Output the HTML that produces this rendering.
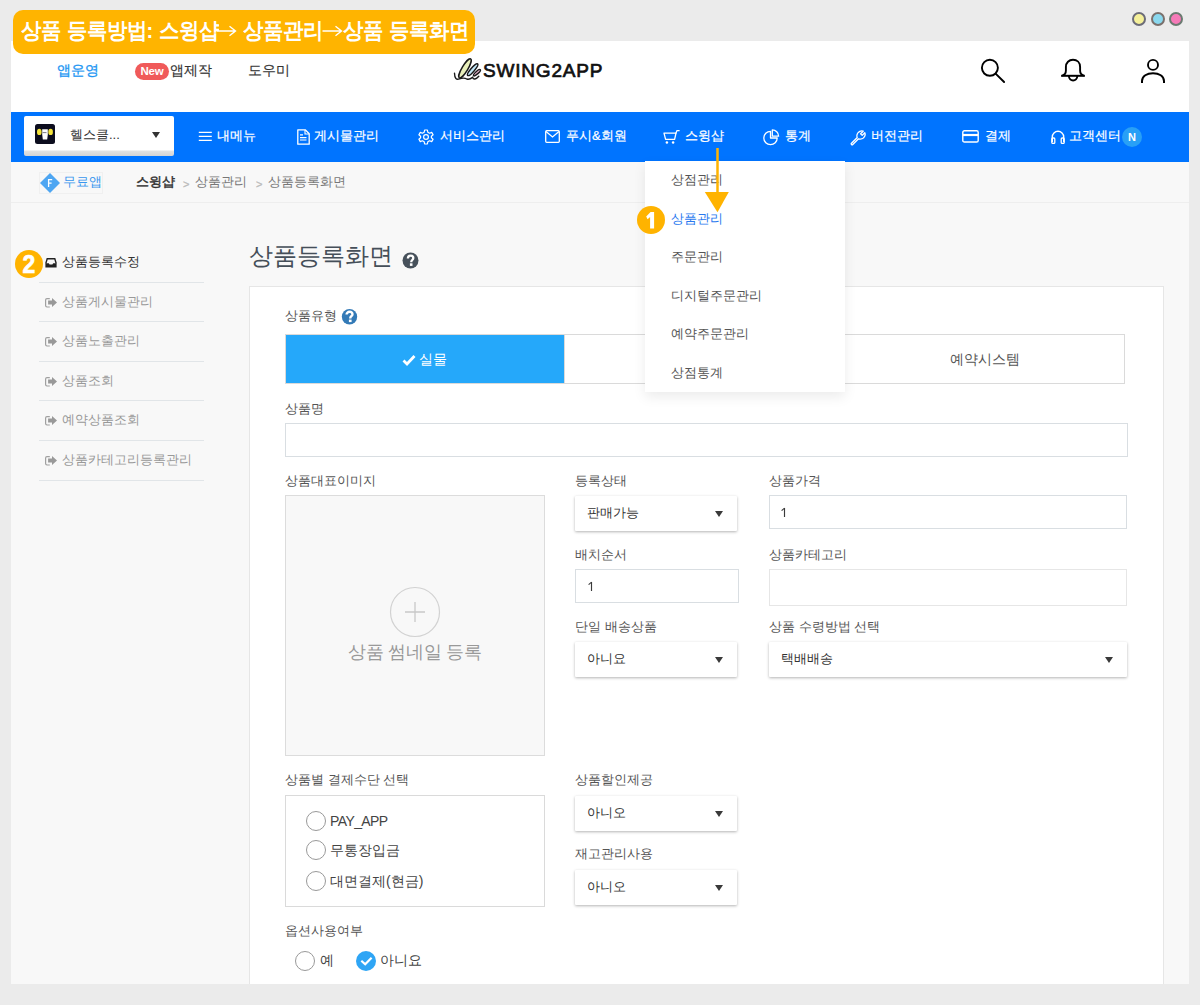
<!DOCTYPE html>
<html><head><meta charset="utf-8">
<style>
*{box-sizing:border-box;margin:0;padding:0}
html,body{width:1200px;height:1005px;overflow:hidden}
body{background:#ebebeb;font-family:"Liberation Sans",sans-serif;position:relative;color:#333}
.a{position:absolute;white-space:nowrap;line-height:1}
.tl{position:absolute;top:12px;width:14px;height:14px;border-radius:50%;border:2px solid #6c6c78}
#frame{position:absolute;left:11px;top:41px;width:1178px;height:943px;background:#fff}
#banner{position:absolute;left:13px;top:10px;width:462px;height:44px;border-radius:10px;background:#ffb400;z-index:5}
.bt{position:absolute;top:21px;font-size:20px;line-height:20px;font-weight:bold;color:#fff;white-space:nowrap;z-index:6;transform:scaleY(1.08);transform-origin:0 60%}
#banner~svg{z-index:6}
#nav{position:absolute;left:11px;top:112px;width:1178px;height:50px;background:#0074ff}
#body{position:absolute;left:11px;top:162px;width:1178px;height:822px;background:#f8f8f8}
.nv{position:absolute;top:129px;font-size:13px;color:#fff;line-height:13px;-webkit-text-stroke:0.2px #fff;white-space:nowrap}
.nv svg{position:absolute}
.bc{position:absolute;top:175px;font-size:13px;line-height:13px;color:#777;white-space:nowrap}
.sb{position:absolute;left:39px;width:165px;height:40px;border-bottom:1px solid #e1e5e8}
.sb span{position:absolute;left:23px;top:12px;font-size:13px;line-height:13px;color:#999;white-space:nowrap}
.sb i{position:absolute;left:6px;top:15px;display:block;line-height:0}
.sb i svg{display:block}
.lbl{position:absolute;font-size:13px;line-height:13px;color:#555;white-space:nowrap}
.inp{position:absolute;background:#fff;border:1px solid #d9dee2}
.inp span{position:absolute;left:11px;top:11px;font-size:13px;line-height:13px;color:#333}
.sel{position:absolute;background:#fff;box-shadow:0 1px 3px rgba(0,0,0,.3);border-radius:1px}
.sel span{position:absolute;left:12px;top:10px;font-size:13px;line-height:13px;color:#333;white-space:nowrap}
.sel b{position:absolute;right:14px;top:15px;width:0;height:0;border-left:4px solid transparent;border-right:4px solid transparent;border-top:6px solid #3a3a3a}
.dd{position:absolute;left:671px;font-size:13px;line-height:13px;color:#555;white-space:nowrap}
.rad{position:absolute;width:20px;height:20px;border-radius:50%;border:1px solid #999;background:#fff}
.rl{position:absolute;font-size:14px;line-height:14px;color:#444;white-space:nowrap}
</style></head><body>
<div class="tl" style="left:1132px;background:#f5f09a;border-color:#6c6c78"></div>
<div class="tl" style="left:1151px;background:#8ad8ee;border-color:#7a706c"></div>
<div class="tl" style="left:1169px;background:#f57ab8;border-color:#6a7a70"></div>

<div id="frame"></div>

<!-- header -->
<div class="a" style="left:57px;top:63px;font-size:14px;color:#2196f3;-webkit-text-stroke:0.3px #2196f3">앱운영</div>
<div class="a" style="left:135px;top:63px;width:34px;height:17px;border-radius:9px;background:#f05a5a;color:#fff;font-size:11.5px;font-weight:bold;line-height:17px;text-align:center;letter-spacing:-0.2px">New</div>
<div class="a" style="left:170px;top:63px;font-size:14px;color:#333;-webkit-text-stroke:0.15px #333">앱제작</div>
<div class="a" style="left:248px;top:63px;font-size:14px;color:#333;-webkit-text-stroke:0.15px #333">도우미</div>

<!-- logo -->
<svg class="a" style="left:450px;top:54px" width="36" height="30" viewBox="0 0 36 30">
 <ellipse cx="15" cy="14.4" rx="2.9" ry="11" transform="rotate(31 15 14.4)" fill="#e9f0bb" stroke="#1a1a1a" stroke-width="1.5"/>
 <ellipse cx="22.6" cy="15.8" rx="1.9" ry="7.6" transform="rotate(41 22.8 15.8)" fill="#c2e7f8" stroke="#1a1a1a" stroke-width="1.5"/>
 <ellipse cx="26.9" cy="18.8" rx="1.3" ry="4.5" transform="rotate(48 27.1 18.8)" fill="#f2bcd8" stroke="#1a1a1a" stroke-width="1.5"/>
 <path d="M4.5 19.2 C4.6 24.5, 6.5 26, 9.4 24.8 C12 24, 14.5 23.6, 16.8 25 C18.8 25.8, 21 24.6, 22.6 23.4 C23.5 25.8, 25.8 25.6, 28.8 22.2" fill="none" stroke="#1a1a1a" stroke-width="1.4" stroke-linecap="round"/>
</svg>
<div class="a" style="left:483px;top:61px;font-size:19px;color:#111;letter-spacing:0.8px;-webkit-text-stroke:0.7px #111">SWING2APP</div>

<!-- header icons -->
<svg class="a" style="left:978px;top:56px" width="30" height="30" viewBox="0 0 30 30">
 <circle cx="11.9" cy="11.8" r="8" fill="none" stroke="#000" stroke-width="1.9"/>
 <path d="M17.6 17.6 L26.1 26" stroke="#000" stroke-width="1.9" stroke-linecap="round"/>
</svg>
<svg class="a" style="left:1058px;top:56px" width="30" height="30" viewBox="0 0 30 30">
 <path d="M4.2 19.6 C6.9 19, 7.9 17.2, 7.9 14.6 V11 C7.9 6.6 11 3.8 15 3.8 C19 3.8 22.1 6.6 22.1 11 V14.6 C22.1 17.2 23.1 19 25.8 19.6" fill="none" stroke="#000" stroke-width="1.9"/>
 <path d="M3.1 19.8 H26.9" stroke="#000" stroke-width="2"/>
 <path d="M10.9 20 C10.9 25.9 19.3 25.9 19.3 20" fill="none" stroke="#000" stroke-width="1.9"/>
</svg>
<svg class="a" style="left:1138px;top:56px" width="30" height="30" viewBox="0 0 30 30">
 <circle cx="15" cy="8.9" r="5" fill="none" stroke="#000" stroke-width="1.9"/>
 <path d="M4 27 V25 C4 20 9 17.2 15 17.2 C21 17.2 26 20 26 25 V27" fill="none" stroke="#000" stroke-width="2"/>
</svg>

<div id="nav"></div>
<div id="body"></div>

<!-- nav -->
<div class="a" style="left:24px;top:116px;width:150px;height:40px;background:linear-gradient(#fff 0,#fff 34px,#e2e2e2 35px,#d4d4d4 40px);border-radius:2px"></div>
<svg class="a" style="left:35px;top:124px" width="20" height="20" viewBox="0 0 20 20">
 <rect width="20" height="20" rx="2.5" fill="#0c0d1e"/>
 <ellipse cx="4.3" cy="7.9" rx="2.3" ry="3.2" fill="#f5e43a"/><ellipse cx="15.6" cy="7.9" rx="2.3" ry="3.2" fill="#f5e43a"/>
 <path d="M7.2 5.2H12.8V10.5L12.2 15.6H7.8L7.2 10.5Z" fill="#fff"/>
 <path d="M7.6 8.6H11.5" stroke="#445" stroke-width="0.7"/>
</svg>
<div class="a" style="left:70px;top:128px;font-size:13px;color:#333">헬스클...</div>
<div class="a" style="left:152px;top:132px;width:0;height:0;border-left:4px solid transparent;border-right:4px solid transparent;border-top:6px solid #333"></div>

<svg class="a" style="left:198px;top:130px" width="14" height="12" viewBox="0 0 14 12"><path d="M0.8 2.4H13.8M0.8 6.3H13.8M0.8 10.3H13.8" stroke="#fff" stroke-width="1.2"/></svg>
<div class="nv" style="left:217px">내메뉴</div>
<svg class="a" style="left:297px;top:129px" width="13" height="16" viewBox="0 0 13 16"><path d="M0.8 0.8H8.2L12.2 4.8V15.2H0.8Z" fill="none" stroke="#fff" stroke-width="1.3" stroke-linejoin="round"/><path d="M8 1V5H12" fill="none" stroke="#fff" stroke-width="1.1"/><path d="M3 5.8H6M3 8.6H9.5M3 11H9.5" fill="none" stroke="#fff" stroke-width="1.2"/></svg>
<div class="nv" style="left:314px">게시물관리</div>
<svg class="a" style="left:418px;top:129px" width="16" height="16" viewBox="0 0 16 16"><path d="M6.6 1H9.4L9.8 3.2L11.6 4.2L13.7 3.4L15.1 5.8L13.4 7.2V8.8L15.1 10.2L13.7 12.6L11.6 11.8L9.8 12.8L9.4 15H6.6L6.2 12.8L4.4 11.8L2.3 12.6L0.9 10.2L2.6 8.8V7.2L0.9 5.8L2.3 3.4L4.4 4.2L6.2 3.2Z" fill="none" stroke="#fff" stroke-width="1.2" stroke-linejoin="round"/><circle cx="8" cy="8" r="2.4" fill="none" stroke="#fff" stroke-width="1.2"/></svg>
<div class="nv" style="left:440px">서비스관리</div>
<svg class="a" style="left:545px;top:130px" width="15" height="13" viewBox="0 0 15 13"><rect x="0.7" y="0.7" width="13.6" height="11.6" rx="1" fill="none" stroke="#fff" stroke-width="1.3"/><path d="M1 1.5L7.5 7L14 1.5" fill="none" stroke="#fff" stroke-width="1.3"/></svg>
<div class="nv" style="left:566px">푸시&amp;회원</div>
<svg class="a" style="left:663px;top:128px" width="17" height="17" viewBox="0 0 17 17"><path d="M1 5.2H13L11.6 11.4H2.6Z" fill="none" stroke="#fff" stroke-width="1.3" stroke-linejoin="round"/><path d="M12.8 5.5L14 2.6H16.6" fill="none" stroke="#fff" stroke-width="1.3"/><circle cx="3.9" cy="14.6" r="1.25" fill="#fff"/><circle cx="10.1" cy="14.6" r="1.25" fill="#fff"/></svg>
<div class="nv" style="left:685px">스윙샵</div>
<svg class="a" style="left:762px;top:129px" width="18" height="17" viewBox="0 0 18 17"><path d="M8.5 2.3A6.7 6.7 0 1 0 15.2 9H8.5Z" fill="none" stroke="#fff" stroke-width="1.3" stroke-linejoin="round"/><path d="M10.3 0.9V7.2H16.6A6.3 6.3 0 0 0 10.3 0.9Z" fill="none" stroke="#fff" stroke-width="1.3" stroke-linejoin="round"/></svg>
<div class="nv" style="left:785px">통계</div>
<svg class="a" style="left:850px;top:130px" width="16" height="16" viewBox="0 0 16 16"><path d="M1.5 13.2L7.2 7.5C6.4 5.2 7.4 2.4 9.8 1.3C11 0.8 12.2 0.8 13.2 1.2L10.6 3.8L12.2 5.4L14.8 2.8C15.3 3.9 15.2 5.2 14.7 6.3C13.6 8.6 10.8 9.6 8.5 8.8L2.8 14.5C2.4 14.9 1.9 14.9 1.5 14.5C1.1 14.1 1.1 13.6 1.5 13.2Z" fill="none" stroke="#fff" stroke-width="1.3" stroke-linejoin="round"/></svg>
<div class="nv" style="left:871px">버전관리</div>
<svg class="a" style="left:962px;top:130px" width="17" height="13" viewBox="0 0 17 13"><rect x="0.8" y="0.8" width="15.4" height="11.2" rx="1.6" fill="none" stroke="#fff" stroke-width="1.4"/><path d="M1 5H16" stroke="#fff" stroke-width="2.2"/></svg>
<div class="nv" style="left:985px">결제</div>
<svg class="a" style="left:1051px;top:129px" width="14" height="15" viewBox="0 0 14 15"><path d="M1.3 13V8A5.7 5.7 0 0 1 12.7 8V13" fill="none" stroke="#fff" stroke-width="1.4"/><rect x="0.8" y="9" width="3" height="5.4" rx="1" fill="none" stroke="#fff" stroke-width="1.3"/><rect x="10.2" y="9" width="3" height="5.4" rx="1" fill="none" stroke="#fff" stroke-width="1.3"/></svg>
<div class="nv" style="left:1069px">고객센터</div>
<div class="a" style="left:1122px;top:127px;width:20px;height:20px;border-radius:50%;background:#28a0f6;color:#fff;font-size:11px;font-weight:bold;line-height:20px;text-align:center">N</div>

<!-- breadcrumb -->
<div class="a" style="left:11px;top:202px;width:1178px;height:1px;background:#eeeeee"></div>
<div class="a" style="left:39px;top:172px;width:64px;height:22px;border:1px solid #f0f0f0"></div>
<svg class="a" style="left:40px;top:173px" width="20" height="20" viewBox="0 0 20 20"><path d="M10 0L20 10L10 20L0 10Z" fill="#4ea6f2"/><path d="M8.6 14V6.6H12.2M8.6 10.2H11.6" fill="none" stroke="#fff" stroke-width="1.3"/></svg>
<div class="bc" style="left:63px;color:#3996ee">무료앱</div>
<div class="bc" style="left:136px;color:#333;-webkit-text-stroke:0.45px #333">스윙샵</div>
<div class="bc" style="left:183px;top:178px;color:#bbb;font-size:11px;-webkit-text-stroke:0.3px #bbb">&gt;</div>
<div class="bc" style="left:195px">상품관리</div>
<div class="bc" style="left:256px;top:178px;color:#bbb;font-size:11px;-webkit-text-stroke:0.3px #bbb">&gt;</div>
<div class="bc" style="left:268px">상품등록화면</div>

<!-- sidebar -->
<div class="sb" style="top:243px"><i style="top:15px"><svg width="12" height="10" viewBox="0 0 12 10"><path d="M0.8 5.5L2.2 0.8H9.8L11.2 5.5" fill="none" stroke="#222" stroke-width="1.4"/><path d="M0.4 5.2H3.8L4.6 6.6H7.4L8.2 5.2H11.6V9.6H0.4Z" fill="#222"/></svg></i><span style="color:#333">상품등록수정</span></div>
<div class="sb" style="top:282px"><i style="top:16px"><svg width="13" height="10" viewBox="0 0 13 10"><path d="M4.8 0.6H2Q0.6 0.6 0.6 2V7.6Q0.6 9 2 9H4.8" fill="none" stroke="#a0a0a0" stroke-width="1.2"/><path d="M3.1 2.6H7V0L12 4.5L7 9V6.4H3.1Z" fill="#999"/></svg></i><span style="top:13px">상품게시물관리</span></div>
<div class="sb" style="top:322px"><i><svg width="13" height="10" viewBox="0 0 13 10"><path d="M4.8 0.6H2Q0.6 0.6 0.6 2V7.6Q0.6 9 2 9H4.8" fill="none" stroke="#a0a0a0" stroke-width="1.2"/><path d="M3.1 2.6H7V0L12 4.5L7 9V6.4H3.1Z" fill="#999"/></svg></i><span>상품노출관리</span></div>
<div class="sb" style="top:361px"><i style="top:16px"><svg width="13" height="10" viewBox="0 0 13 10"><path d="M4.8 0.6H2Q0.6 0.6 0.6 2V7.6Q0.6 9 2 9H4.8" fill="none" stroke="#a0a0a0" stroke-width="1.2"/><path d="M3.1 2.6H7V0L12 4.5L7 9V6.4H3.1Z" fill="#999"/></svg></i><span style="top:13px">상품조회</span></div>
<div class="sb" style="top:401px"><i><svg width="13" height="10" viewBox="0 0 13 10"><path d="M4.8 0.6H2Q0.6 0.6 0.6 2V7.6Q0.6 9 2 9H4.8" fill="none" stroke="#a0a0a0" stroke-width="1.2"/><path d="M3.1 2.6H7V0L12 4.5L7 9V6.4H3.1Z" fill="#999"/></svg></i><span>예약상품조회</span></div>
<div class="sb" style="top:441px"><i><svg width="13" height="10" viewBox="0 0 13 10"><path d="M4.8 0.6H2Q0.6 0.6 0.6 2V7.6Q0.6 9 2 9H4.8" fill="none" stroke="#a0a0a0" stroke-width="1.2"/><path d="M3.1 2.6H7V0L12 4.5L7 9V6.4H3.1Z" fill="#999"/></svg></i><span>상품카테고리등록관리</span></div>

<!-- title -->
<div class="a" style="left:249px;top:244px;font-size:24px;color:#454f59">상품등록화면</div>
<svg class="a" style="left:402px;top:252px" width="17" height="17" viewBox="0 0 17 17"><circle cx="8.5" cy="8.5" r="8" fill="#47515b"/><path d="M5.9 6.5C5.9 4.8 7.1 3.7 8.6 3.7C10.1 3.7 11.3 4.7 11.3 6.1C11.3 7.9 9.3 8.1 9.3 9.7V10.2" fill="none" stroke="#fff" stroke-width="2.3"/><rect x="7.9" y="11.3" width="2.6" height="2.6" fill="#fff"/></svg>

<!-- panel -->
<div class="a" style="left:249px;top:286px;width:915px;height:720px;background:#fff;border:1px solid #e6e6e6"></div>
<div class="lbl" style="left:285px;top:309px">상품유형</div>
<svg class="a" style="left:341px;top:308px" width="17" height="17" viewBox="0 0 17 17"><circle cx="8.5" cy="8.7" r="7.7" fill="#337ab7"/><path d="M5.6 6.6C5.6 4.8 6.9 3.8 8.6 3.8C10.3 3.8 11.5 4.8 11.5 6.2C11.5 8 9.3 8.3 9.3 10V10.6" fill="none" stroke="#fff" stroke-width="2.4"/><rect x="7.9" y="11.6" width="2.7" height="2.5" fill="#fff"/></svg>
<div class="a" style="left:285px;top:334px;width:840px;height:50px;border:1px solid #dadada;background:#fff"></div>
<div class="a" style="left:286px;top:335px;width:278px;height:48px;background:#25a8fa"></div>
<div class="a" style="left:564px;top:334px;width:1px;height:50px;background:#dadada"></div>
<div class="a" style="left:844px;top:334px;width:1px;height:50px;background:#dadada"></div>
<svg class="a" style="left:402px;top:354px" width="14" height="12" viewBox="0 0 14 12"><path d="M1.5 6.5L5 10L12.5 2" fill="none" stroke="#fff" stroke-width="2.8"/></svg>
<div class="a" style="left:419px;top:352px;font-size:14px;color:#fff">실물</div>
<div class="a" style="left:950px;top:352px;font-size:14px;color:#555">예약시스템</div>

<div class="lbl" style="left:285px;top:402px">상품명</div>
<div class="inp" style="left:285px;top:423px;width:843px;height:34px"></div>

<div class="lbl" style="left:285px;top:474px">상품대표이미지</div>
<div class="a" style="left:285px;top:495px;width:260px;height:261px;background:#f8f8f8;border:1px solid #dcdcdc"></div>
<svg class="a" style="left:389px;top:586px" width="52" height="52" viewBox="0 0 52 52"><circle cx="26" cy="26" r="24.5" fill="none" stroke="#d2d2d2" stroke-width="1.2"/><path d="M26 16V36M16 26H36" stroke="#c8c8c8" stroke-width="1.3"/></svg>
<div class="a" style="left:348px;top:643px;font-size:18px;color:#999;letter-spacing:-0.25px">상품 썸네일 등록</div>

<div class="lbl" style="left:575px;top:474px">등록상태</div>
<div class="sel" style="left:575px;top:496px;width:162px;height:35px"><span>판매가능</span><b></b></div>
<div class="lbl" style="left:575px;top:548px">배치순서</div>
<div class="inp" style="left:575px;top:569px;width:164px;height:34px"><svg style="position:absolute;left:11px;top:11px" width="7" height="11" viewBox="0 0 7 11"><path d="M4.5 1V10" stroke="#3a3a3a" stroke-width="1.15"/><path d="M1.6 3.6L4.6 1.1" stroke="#3a3a3a" stroke-width="1.1"/></svg></div>
<div class="lbl" style="left:575px;top:620px">단일 배송상품</div>
<div class="sel" style="left:575px;top:642px;width:162px;height:35px"><span>아니요</span><b></b></div>

<div class="lbl" style="left:769px;top:474px">상품가격</div>
<div class="inp" style="left:769px;top:495px;width:358px;height:34px"><svg style="position:absolute;left:10px;top:11px" width="7" height="11" viewBox="0 0 7 11"><path d="M4.5 1V10" stroke="#3a3a3a" stroke-width="1.15"/><path d="M1.6 3.6L4.6 1.1" stroke="#3a3a3a" stroke-width="1.1"/></svg></div>
<div class="lbl" style="left:769px;top:548px">상품카테고리</div>
<div class="inp" style="left:769px;top:569px;width:358px;height:37px;border-color:#e6e6e6"></div>
<div class="lbl" style="left:769px;top:620px">상품 수령방법 선택</div>
<div class="sel" style="left:769px;top:642px;width:358px;height:35px"><span>택배배송</span><b></b></div>

<div class="lbl" style="left:285px;top:773px">상품별 결제수단 선택</div>
<div class="a" style="left:285px;top:795px;width:260px;height:112px;background:#fff;border:1px solid #dadada"></div>
<div class="rad" style="left:306px;top:811px"></div><div class="rl" style="left:330px;top:814px;letter-spacing:-0.6px">PAY_APP</div>
<div class="rad" style="left:306px;top:840px"></div><div class="rl" style="left:330px;top:843px">무통장입금</div>
<div class="rad" style="left:306px;top:871px"></div><div class="rl" style="left:330px;top:874px">대면결제(현금)</div>

<div class="lbl" style="left:575px;top:773px">상품할인제공</div>
<div class="sel" style="left:575px;top:796px;width:162px;height:35px"><span>아니오</span><b></b></div>
<div class="lbl" style="left:575px;top:847px">재고관리사용</div>
<div class="sel" style="left:575px;top:870px;width:162px;height:35px"><span>아니오</span><b></b></div>

<div class="lbl" style="left:285px;top:924px">옵션사용여부</div>
<div class="rad" style="left:295px;top:951px"></div><div class="rl" style="left:320px;top:953px">예</div>
<div class="a" style="left:356px;top:951px;width:20px;height:20px;border-radius:50%;background:#2ea5f5"></div>
<svg class="a" style="left:356px;top:951px" width="20" height="20" viewBox="0 0 20 20"><path d="M5.3 9.8L9.2 13.3L15.6 6.8" fill="none" stroke="#fff" stroke-width="2.2"/></svg>
<div class="rl" style="left:380px;top:953px">아니요</div>

<!-- bottom gray -->
<div class="a" style="left:0;top:984px;width:1200px;height:21px;background:#ebebeb"></div>

<!-- dropdown -->
<div class="a" style="left:645px;top:161px;width:200px;height:231px;background:#fff;box-shadow:0 5px 12px rgba(0,0,0,.08)"></div>
<div class="dd" style="top:173px">상점관리</div>
<div class="dd" style="top:212px;color:#2979ef">상품관리</div>
<div class="dd" style="top:250px">주문관리</div>
<div class="dd" style="top:289px">디지털주문관리</div>
<div class="dd" style="top:327px">예약주문관리</div>
<div class="dd" style="top:366px">상점통계</div>

<!-- annotations -->
<svg class="a" style="left:700px;top:146px" width="36" height="70" viewBox="0 0 36 70"><path d="M17.5 2V50" stroke="#ffb300" stroke-width="2.5"/><path d="M4.8 46H28.8L17.5 66.3Z" fill="#ffb300"/></svg>
<div class="a" style="left:637px;top:206px;width:28px;height:28px;border-radius:50%;background:#ffb300"></div><svg class="a" style="left:637px;top:206px" width="28" height="28" viewBox="0 0 28 28"><path d="M9.2 10.4L13.6 6.1H17.1V22.4H13.1V10.9L10.6 13.2Z" fill="#fff"/></svg>
<div class="a" style="left:15px;top:250px;width:28px;height:28px;border-radius:50%;background:#ffb300"></div><div class="a" style="left:15px;top:252px;width:28px;font-size:25px;font-weight:bold;line-height:25px;color:#fff;text-align:center;transform:scaleX(0.92);-webkit-text-stroke:0.6px #fff">2</div>
<div id="banner"></div>
<div class="bt" style="left:21px">상품 등록방법: 스윙샵</div><svg class="a" style="left:216px;top:25px" width="21" height="12" viewBox="0 0 21 12"><path d="M0.5 6 H19 M13.5 1.2 L19.5 6 L13.5 10.8" fill="none" stroke="#fff" stroke-width="1.4"/></svg>
<div class="bt" style="left:243px">상품관리</div><svg class="a" style="left:322px;top:25px" width="21" height="12" viewBox="0 0 21 12"><path d="M0.5 6 H19 M13.5 1.2 L19.5 6 L13.5 10.8" fill="none" stroke="#fff" stroke-width="1.4"/></svg>
<div class="bt" style="left:343px">상품 등록화면</div>
</body></html>
